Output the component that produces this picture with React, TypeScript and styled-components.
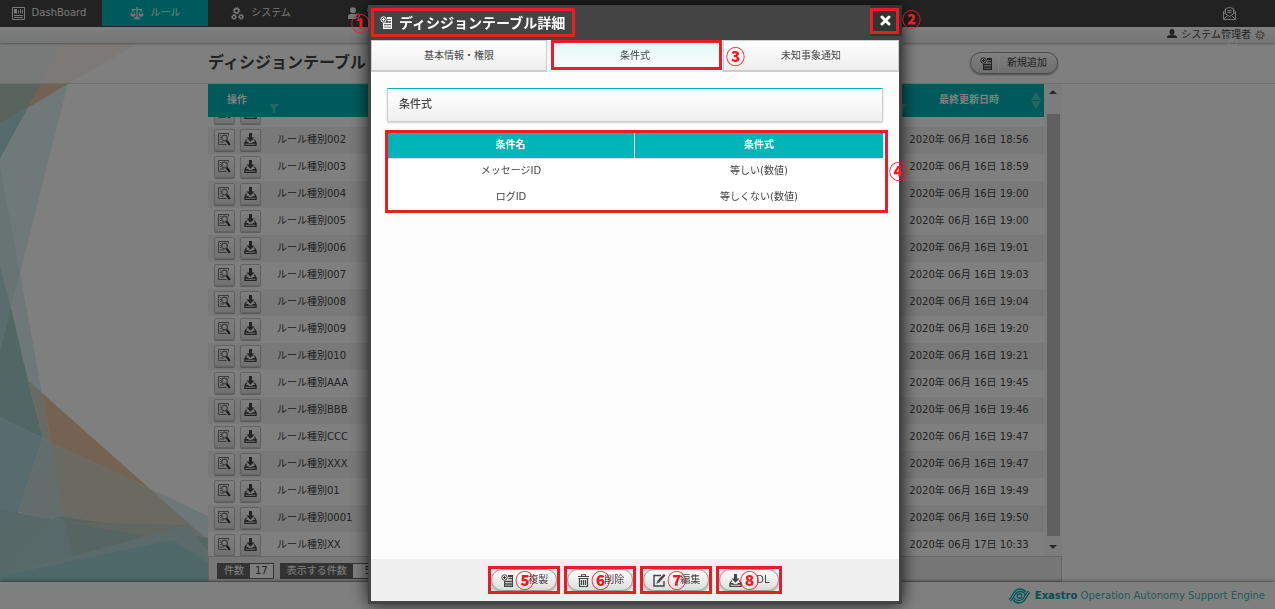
import React, { useLayoutEffect, useRef } from "react";
import styled, { createGlobalStyle, css } from "styled-components";

const TEAL = "#00b5b8";
const RED = "#ed1c24";
const DARK = "#444";

const GlobalStyle = createGlobalStyle`
  *, *::before, *::after { box-sizing: border-box; }
  body {
    margin: 0;
    background: #fff;
    color: #444;
    font: 10px/16px "DejaVu Sans", "Noto Sans CJK JP", sans-serif;
  }
  button, select { font: inherit; color: inherit; margin: 0; padding: 0; border: 0; background: none; }
  h1, h2, h3, ul { margin: 0; padding: 0; }
  ul { list-style: none; }
  a { color: inherit; text-decoration: none; }
  svg { display: block; flex: none; }
`;

/* ---------- icons ---------- */

const TableAddIcon = () => (
  <svg width="13" height="13" viewBox="0 0 13 13" fill="none" stroke="currentColor">
    <circle cx="3.5" cy="3.5" r="2.7" />
    <path d="M2 3.5h3M3.5 2v3" />
    <path d="M7 1h5v2H7z" fill="currentColor" stroke="none" />
    <path d="M7.500 4.500H12M4 7.500h8M4 10h8M3 12.300h9" strokeWidth="1.500" />
    <path d="M3.500 7v5.500M11.500 2v10.500" />
  </svg>
);

const DashIcon = () => (
  <svg width="13" height="13" viewBox="0 0 13 13" fill="none" stroke="currentColor">
    <path d="M.5.5h12v12H.5z" />
    <path d="M2 2h3v4.500H2zM6 3.500h1v3H6zM8 2h1v4.500H8zM10 3h1v3.500h-1z" fill="currentColor" stroke="none" />
    <path d="M2 8.500h9M2 10.500h9" />
  </svg>
);

const ScalesIcon = () => (
  <svg width="14" height="13" viewBox="0 0 14 13" fill="none" stroke="currentColor">
    <path d="M7 0v12M1.500 2.500h11M3.500 12h7M4.500 10.500h5" strokeWidth="1.200" />
    <path d="M3 3L.8 7.500h4.400zM11 3L8.800 7.500h4.400z" strokeWidth=".8" />
    <path d="M.3 7.500h5.400Q5 9.700 3 9.700T.3 7.500zM8.300 7.500h5.400Q13 9.700 11 9.700T8.300 7.500z" fill="currentColor" stroke="none" />
  </svg>
);

const GearsIcon = () => (
  <svg width="13" height="13" viewBox="0 0 13 13" fill="none" stroke="currentColor">
    <circle cx="5.500" cy="3.800" r="2.200" strokeWidth="1.600" />
    <circle cx="5.500" cy="3.800" r="3.300" strokeDasharray="1.300 1.300" />
    <circle cx="3" cy="10" r="1.600" strokeWidth="1.300" />
    <circle cx="3" cy="10" r="2.500" strokeDasharray="1 1" />
    <circle cx="10" cy="9.800" r="1.600" strokeWidth="1.300" />
    <circle cx="10" cy="9.800" r="2.500" strokeDasharray="1 1" />
  </svg>
);

const UserKeyIcon = () => (
  <svg width="12" height="13" viewBox="0 0 12 13" fill="currentColor">
    <circle cx="5" cy="3.200" r="3" />
    <path d="M0 12V9.500Q0 7 3 7h4q1 0 1 1v4z" />
    <circle cx="9.500" cy="9" r="2" fill="none" stroke="currentColor" />
  </svg>
);

const MailIcon = () => (
  <svg width="13" height="13" viewBox="0 0 13 13" fill="none" stroke="currentColor">
    <path d="M.5 4.500L3 3M12.500 4.500L10 3M.5 4.500v8h12v-8" />
    <path d="M2.500 6.500V1.500L6.500.5l4 1v5" />
    <path d="M.5 5.500l6 4 6-4M1 12l3.500-3.500M12 12L8.500 8.500M4.500 3.500h4M4.500 5.500h4" />
  </svg>
);

const LogoutIcon = () => (
  <svg width="12" height="13" viewBox="0 0 12 13" fill="none" stroke="#fff">
    <path d="M.5 1h3M6 1h3M.5 1v6M3.500 6.500h8v6h-8z" />
    <path d="M3.500 9h5" strokeWidth="2" />
  </svg>
);

const PersonIcon = () => (
  <svg width="10" height="12" viewBox="0 0 10 12" fill="currentColor">
    <ellipse cx="5" cy="3" rx="2.500" ry="3" />
    <path d="M0 9V8q0-1.500 3.500-2h3Q10 6.500 10 8v1z" />
  </svg>
);

const GearIcon = () => (
  <svg width="10" height="10" viewBox="0 0 10 10" fill="none" stroke="#777">
    <circle cx="5" cy="5" r="3.200" />
    <circle cx="5" cy="5" r="1" strokeWidth=".6" />
    <circle cx="5" cy="5" r="4.300" strokeDasharray="1.400 1.977" />
  </svg>
);

const DetailIcon = () => (
  <svg width="13" height="13" viewBox="0 0 13 13" fill="none" stroke="#777">
    <path d="M10.500 2.500V.5H.5v11h8" />
    <path d="M2 2.500h1M2 4.500h1M2 6.500h1M2 9h4" />
    <circle cx="6.500" cy="5" r="2.800" strokeWidth="1.200" />
    <path d="M8.700 7.600l3 4.400" stroke="#333" strokeWidth="2.200" />
  </svg>
);

const DownloadIcon = () => (
  <svg width="13" height="13" viewBox="0 0 13 13" fill="currentColor">
    <path d="M5 0h3v4.500h2.500L6.500 8.700l-4-4.200H5z" />
    <path d="M2 6.500h1.300L2 9h2l1 1h3l1-1h2L9.700 6.500H11l1.700 3V13H.3V9.500zM1.500 10.800v1h10v-1z" />
  </svg>
);

const TrashIcon = () => (
  <svg width="13" height="13" viewBox="0 0 13 13" fill="none" stroke="currentColor">
    <path d="M1 2.500h11M4.500 2V.7h4V2M1.500 4.500h10" />
    <path d="M2.500 4.500v8h8v-8M4.500 6v5M6.500 6v5M8.500 6v5" strokeWidth="1.200" />
  </svg>
);

const EditIcon = () => (
  <svg width="13" height="13" viewBox="0 0 13 13" fill="none" stroke="currentColor">
    <path d="M8 1.500H1v10.500h10V7" strokeWidth="1.400" />
    <path d="M11.700.8L5.500 7.400" strokeWidth="2.400" />
    <path d="M4.600 6.500L3.300 9.700l3.200-1.300z" fill="currentColor" stroke="none" />
  </svg>
);

const CloseIcon = () => (
  <svg width="11" height="11" viewBox="0 0 11 11" stroke="#fff" strokeWidth="3" strokeLinecap="round">
    <path d="M2 2l7 7M9 2L2 9" />
  </svg>
);

const FilterIcon = () => (
  <svg width="10" height="9" viewBox="0 0 10 9" fill="currentColor">
    <path d="M0 0h10L6.200 4.500V9H3.800V4.500z" />
  </svg>
);

const SortIcon = () => (
  <svg width="10" height="17" viewBox="0 0 10 17" fill="currentColor">
    <path d="M5 0l5 8H0zM0 9h10l-5 8z" />
  </svg>
);

const LogoIcon = () => (
  <svg width="23" height="16" viewBox="0 0 23 16" fill="none" stroke={TEAL} strokeWidth="1.400">
    <path d="M1 11.500Q3 10 5 6q2.500-5 7-5 3.500 0 6 3" />
    <path d="M2.500 13Q5 11 6.500 7.500q2-4 5.500-4 4 0 5.500 3.500" />
    <path d="M22 4.500Q20 6 18 10q-2.500 5-7 5-3.500 0-6-3" />
    <path d="M20.500 3Q18 5 16.500 8.500q-2 4-5.500 4Q7.500 12.500 6 10" />
    <circle cx="11.500" cy="8" r="2.300" />
  </svg>
);

const facets: [string, string][] = [
  ["0,43 62,43 42,83 28,108 0,124", "#b2c8be"],
  ["62,43 138,43 70,83 28,108", "#e4c4a2"],
  ["0,124 28,108 0,159", "#aad4da"],
  ["28,108 68,84 20,273 11,308 0,167 0,159", "#def2f5"],
  ["0,167 20,273 11,308 0,265", "#d0e8e6"],
  ["0,265 11,308 0,350", "#b2d8de"],
  ["20,273 42,393 28,380 11,308", "#dcf0f3"],
  ["11,308 28,380 43,438 0,418 0,350", "#a0cecc"],
  ["28,380 42,393 51,443 43,438", "#d2d4c6"],
  ["42,393 149,488 51,443", "#e8c6a6"],
  ["149,488 208,516 208,540", "#daeff4"],
  ["51,443 149,488 208,540 208,552 60,530", "#d4d4c6"],
  ["0,418 43,438 18,512 0,560", "#b0d6dc"],
  ["43,438 51,443 65,524 18,512", "#c6dcd8"],
  ["0,509 64,522 170,545 0,576", "#acd0d0"],
  ["57,516 208,538 208,550 66,556", "#a8cac4"],
  ["64,522 188,525 208,552 172,541", "#c4ccc0"],
  ["57,516 64,520 73,556 0,576", "#b0d2d2"],
  ["0,576 188,525 208,552 208,576", "#b6d6d6"],
  ["0,576 173,540 208,563 208,582 0,582", "#9ed0d4"],
];

const Backdrop = styled.svg`
  position: absolute;
  top: 0;
  left: 0;
`;

/* ---------- page shell ---------- */

const Page = styled.div`
  position: relative;
  display: flex;
  flex-direction: column;
  height: 100vh;
  overflow: hidden;
`;

const Nav = styled.nav`
  position: relative;
  display: flex;
  justify-content: space-between;
  flex: none;
  height: 27px;
  padding-right: 39px;
  background: ${DARK};
  color: #f0f0f0;
`;

const NavList = styled.ul`
  display: flex;
`;

const NavLink = styled.a<{ $home?: boolean; $active?: boolean }>`
  display: flex;
  align-items: center;
  justify-content: center;
  gap: 7px;
  min-width: ${(p) => (p.$home ? 102 : 106)}px;
  height: 26px;
  padding-right: ${(p) => (p.$home ? 4 : 0)}px;
  background: ${(p) => (p.$active ? TEAL : "transparent")};
`;

const IconLink = styled.button`
  display: flex;
  align-items: center;
`;

const LogoutButton = styled.button`
  position: absolute;
  top: 5px;
  right: 38px;
  opacity: 0.8;
`;

const UserBar = styled.div`
  position: relative;
  z-index: 1;
  display: flex;
  align-items: center;
  justify-content: flex-end;
  gap: 4px;
  flex: none;
  height: 16px;
  padding-right: 10px;
  background: linear-gradient(#fff, #eaeaea);
  box-shadow: 0 1px 2px rgba(0, 0, 0, 0.3);
`;

const TitleBar = styled.header`
  position: relative;
  display: flex;
  align-items: center;
  justify-content: space-between;
  flex: none;
  height: 41px;
  padding: 0 217px 0 208px;
  border-bottom: 1px solid #ddd;
  background: rgba(255, 255, 255, 0.8);
`;

const PageTitle = styled.h1`
  font-size: 16px;
  line-height: 24px;
`;

const PillButton = styled.button`
  position: relative;
  display: flex;
  align-items: center;
  height: 22px;
  border: 1px solid #999;
  border-radius: 11px;
  background: linear-gradient(#fff, #ddd);
  box-shadow: 0 1px 2px rgba(0, 0, 0, 0.4);
  color: #444;
`;

const PillIcon = styled.span`
  display: flex;
  align-items: center;
  height: 20px;
  padding: 0 5px 0 9px;
  border-right: 1px solid #fff;
`;

const PillLabel = styled.span<{ $wide?: boolean }>`
  padding: 0 ${(p) => (p.$wide ? 10 : 8)}px 0 8px;
`;

const ListArea = styled.main`
  position: relative;
  display: flex;
  flex-direction: column;
  flex: 1;
  min-height: 0;
  margin: 0 213px 0 208px;
  background: #fff;
`;

const ScrollRow = styled.div`
  display: flex;
  flex: 1;
  min-height: 0;
`;

const Scroller = styled.div`
  position: relative;
  z-index: 0;
  flex: 1;
  overflow: hidden;
`;

const RuleTable = styled.table`
  width: 100%;
  border-spacing: 0;
  table-layout: fixed;
`;

const RuleHead = styled.th<{ $width?: number }>`
  position: sticky;
  top: 0;
  z-index: 1;
  width: ${(p) => (p.$width ? `${p.$width}px` : "auto")};
  height: 33px;
  padding: 0 0 2px;
  background: ${TEAL};
  color: #fff;
  text-align: center;
`;

const HeadIcon = styled.span<{ $side: "left" | "right" }>`
  position: absolute;
  color: rgba(255, 255, 255, 0.3);
  ${(p) => (p.$side === "left" ? css`left: 3px; bottom: 4px;` : css`right: 3px; top: 8px;`)}
`;

const RuleRow = styled.tr`
  &:nth-child(even) { background: #f2f2f2; }
`;

const RuleCell = styled.td<{ $center?: boolean }>`
  height: 27px;
  padding: 0 0 2px ${(p) => (p.$center ? 0 : 11)}px;
  text-align: ${(p) => (p.$center ? "center" : "left")};
`;

const Actions = styled.div`
  display: flex;
  gap: 5px;
  padding: 0 0 0 6px;
`;

const ActionButton = styled.button`
  display: flex;
  align-items: center;
  justify-content: center;
  width: 21px;
  height: 22px;
  border: 1px solid #c4c4c4;
  border-radius: 2px;
  background: linear-gradient(#fff, #e2e2e2);
  box-shadow: 0 1px 1px rgba(0, 0, 0, 0.3);
`;

const Track = styled.div`
  display: flex;
  flex-direction: column;
  align-items: center;
  width: 18px;
  padding: 6px 0 7px;
  background: #f8f8f8;
`;

const Thumb = styled.div`
  flex: 1;
  width: 13px;
  margin: 20px 0 9px;
  background: #c1c1c1;
`;

const Arrow = styled.span<{ $down?: boolean }>`
  border: 4px solid transparent;
  ${(p) => (p.$down
    ? css`border-top-color: #505050; border-bottom: 0;`
    : css`border-bottom-color: #505050; border-top: 0;`)}
`;

const ListFooter = styled.div`
  display: flex;
  align-items: center;
  gap: 6px;
  flex: none;
  height: 26px;
  padding: 4px 8px 0;
  border: 1px solid #ccc;
  background: #eee;
`;

const Counter = styled.label`
  display: flex;
  align-items: center;
  height: 16px;
  padding-left: 6px;
  gap: 6px;
  border: 1px solid #666;
  background: #666;
  color: #fff;
`;

const CountValue = styled.output`
  height: 14px;
  padding: 0 5px;
  background: #fff;
  color: #444;
  line-height: 14px;
`;

const CountSelect = styled.select`
  appearance: none;
  width: 56px;
  height: 14px;
  padding-left: 12px;
  background: #fff;
  color: #444;
  line-height: 14px;
`;

const PageFooter = styled.footer`
  position: relative;
  display: flex;
  align-items: center;
  justify-content: flex-end;
  gap: 4px;
  flex: none;
  height: 27px;
  padding-right: 10px;
  background: #fff;
  box-shadow: 0 -1px 3px rgba(0, 0, 0, 0.4);
  color: #3fb5b5;
  b { color: #00a0a4; }
`;

/* ---------- dialog ---------- */

const Overlay = styled.div`
  position: fixed;
  inset: 0;
  z-index: 10;
  display: flex;
  justify-content: center;
  padding: 5px 5px 5px 0;
  background: rgba(0, 0, 0, 0.5);
`;

const Dialog = styled.section`
  display: flex;
  flex-direction: column;
  width: 534px;
  max-width: 100%;
  border: solid ${DARK};
  border-width: 0 3px 3px;
  background: #fdfdfd;
  box-shadow: 0 0 16px rgba(0, 0, 0, 0.8);
`;

const DialogHeader = styled.header`
  display: flex;
  justify-content: space-between;
  flex: none;
  height: 35px;
  background: ${DARK};
  color: #fff;
`;

const DialogTitle = styled.h2`
  position: relative;
  display: flex;
  align-items: center;
  gap: 6px;
  padding: 0 10px 0 9px;
  font-size: 14px;
  line-height: 20px;
`;

const CloseButton = styled.button`
  position: relative;
  display: flex;
  align-items: center;
  justify-content: center;
  width: 32px;
  height: 31px;
  margin-right: -3px;
  padding-right: 2px;
  background: #333;
`;

const Tabs = styled.div`
  display: grid;
  grid-template-columns: repeat(3, 1fr);
  flex: none;
`;

const Tab = styled.button<{ $active?: boolean }>`
  position: relative;
  height: 32px;
  border: 1px solid #ccc;
  border-width: 1px 1px 2px;
  background: linear-gradient(#fff, #eee);
  ${(p) => p.$active && css`
    border-color: transparent;
    background: linear-gradient(#e2f6f7, #fdfdfd);
  `}
`;

const DialogBody = styled.div`
  flex: 1;
  min-height: 0;
  padding: 16px;
`;

const SectionTitle = styled.h3`
  height: 34px;
  margin-bottom: 10px;
  padding-left: 11px;
  border: 1px solid #ccc;
  border-top-color: ${TEAL};
  border-radius: 0 0 2px 2px;
  background: linear-gradient(#fff, #f0f0f0);
  box-shadow: 0 1px 2px rgba(0, 0, 0, 0.2);
  font-size: 11px;
  font-weight: 500;
  line-height: 32px;
`;

const Marked = styled.div`
  position: relative;
`;

const ConditionTable = styled.table`
  width: 100%;
  border-spacing: 0;
  table-layout: fixed;
  text-align: center;
  th {
    height: 27px;
    padding: 0;
    border-bottom: 1px solid #ddd;
    background: ${TEAL};
    color: #fff;
  }
  th:first-child { border-right: 1px solid #ddd; }
  td { height: 26px; padding: 0 0 2px; background: #fff; }
`;

const DialogFooter = styled.footer`
  display: flex;
  align-items: center;
  justify-content: center;
  gap: 10px;
  flex: none;
  height: 42px;
  background: #f0f0f0;
`;

/* ---------- call-outs ---------- */

const Frame = styled.span<{ $inset: string }>`
  position: absolute;
  inset: ${(p) => p.$inset};
  z-index: 1;
  border: 3px solid ${RED};
  pointer-events: none;
`;

const Callout = styled.span<{ $left: string; $top: string }>`
  position: absolute;
  left: ${(p) => p.$left};
  top: ${(p) => p.$top};
  z-index: 2;
  width: 19px;
  color: ${RED};
  font: 900 19px/18px "Noto Sans CJK JP", sans-serif;
  text-align: center;
`;

/* ---------- data ---------- */

const rules: [string, string][] = [
  ["001", "16日 18:54"], ["002", "16日 18:56"], ["003", "16日 18:59"], ["004", "16日 19:00"],
  ["005", "16日 19:00"], ["006", "16日 19:01"], ["007", "16日 19:03"], ["008", "16日 19:04"],
  ["009", "16日 19:20"], ["010", "16日 19:21"], ["AAA", "16日 19:45"], ["BBB", "16日 19:46"],
  ["CCC", "16日 19:47"], ["XXX", "16日 19:47"], ["01", "16日 19:49"], ["0001", "16日 19:50"],
  ["XX", "17日 10:33"],
];

const conditions = [
  ["メッセージID", "等しい(数値)"],
  ["ログID", "等しくない(数値)"],
];

const commands = [
  { label: "複製", mark: "⑤", icon: <TableAddIcon /> },
  { label: "削除", mark: "⑥", icon: <TrashIcon /> },
  { label: "編集", mark: "⑦", icon: <EditIcon /> },
  { label: "DL", mark: "⑧", icon: <DownloadIcon /> },
];

function RuleList() {
  const scroller = useRef<HTMLDivElement>(null);
  useLayoutEffect(() => {
    if (scroller.current) scroller.current.scrollTop = 17;
  }, []);

  return (
    <ListArea>
      <ScrollRow>
        <Scroller ref={scroller}>
          <RuleTable>
            <thead>
              <tr>
                <RuleHead $width={58}>操作</RuleHead>
                <RuleHead><HeadIcon $side="left"><FilterIcon /></HeadIcon></RuleHead>
                <RuleHead $width={150}>
                  <HeadIcon $side="left"><FilterIcon /></HeadIcon>
                  最終更新日時
                  <HeadIcon $side="right"><SortIcon /></HeadIcon>
                </RuleHead>
              </tr>
            </thead>
            <tbody>
              {rules.map(([name, date]) => (
                <RuleRow key={name}>
                  <RuleCell $center>
                    <Actions>
                      <ActionButton aria-label="詳細"><DetailIcon /></ActionButton>
                      <ActionButton aria-label="ダウンロード"><DownloadIcon /></ActionButton>
                    </Actions>
                  </RuleCell>
                  <RuleCell>ルール種別{name}</RuleCell>
                  <RuleCell $center>2020年 06月 {date}</RuleCell>
                </RuleRow>
              ))}
            </tbody>
          </RuleTable>
        </Scroller>
        <Track>
          <Arrow />
          <Thumb />
          <Arrow $down />
        </Track>
      </ScrollRow>
      <ListFooter>
        <Counter>件数<CountValue>17</CountValue></Counter>
        <Counter>
          表示する件数
          <CountSelect defaultValue="50"><option>50</option><option>100</option></CountSelect>
        </Counter>
      </ListFooter>
    </ListArea>
  );
}

function DetailDialog() {
  return (
    <Overlay>
      <Dialog role="dialog" aria-label="ディシジョンテーブル詳細">
        <DialogHeader>
          <DialogTitle>
            <TableAddIcon />
            ディシジョンテーブル詳細
            <Frame $inset="3px 0" />
            <Callout $left="-20px" $top="9px">①</Callout>
          </DialogTitle>
          <CloseButton aria-label="閉じる">
            <CloseIcon />
            <Frame $inset="3px 3px 2px 0" />
            <Callout $left="32px" $top="5px">②</Callout>
          </CloseButton>
        </DialogHeader>
        <Tabs role="tablist">
          <Tab role="tab">基本情報・権限</Tab>
          <Tab role="tab" aria-selected $active>
            条件式
            <Frame $inset="-1px 0 0 3px" />
          </Tab>
          <Tab role="tab">
            未知事象通知
            <Callout $left="2px" $top="6px">③</Callout>
          </Tab>
        </Tabs>
        <DialogBody>
          <SectionTitle>条件式</SectionTitle>
          <Marked>
            <ConditionTable>
              <thead><tr><th>条件名</th><th>条件式</th></tr></thead>
              <tbody>
                {conditions.map(([name, expr]) => (
                  <tr key={name}><td>{name}</td><td>{expr}</td></tr>
                ))}
              </tbody>
            </ConditionTable>
            <Frame $inset="-2px -5px -2px -2px" />
            <Callout $left="502px" $top="30px">④</Callout>
          </Marked>
        </DialogBody>
        <DialogFooter>
          {commands.map((c) => (
            <PillButton key={c.label}>
              <PillIcon>{c.icon}</PillIcon>
              <PillLabel>{c.label}</PillLabel>
              <Frame $inset="-4px" />
              <Callout $left="calc(50% - 9px)" $top="1px">{c.mark}</Callout>
            </PillButton>
          ))}
        </DialogFooter>
      </Dialog>
    </Overlay>
  );
}

export default function App() {
  return (
    <>
      <GlobalStyle />
      <Page>
        <Backdrop width="208" height="582" viewBox="0 0 208 582" aria-hidden>
          {facets.map(([points, fill]) => <polygon key={points} points={points} fill={fill} />)}
        </Backdrop>
        <Nav>
          <NavList>
            <li><NavLink href="#dashboard" $home><DashIcon />DashBoard</NavLink></li>
            <li><NavLink href="#rule" $active><ScalesIcon />ルール</NavLink></li>
            <li><NavLink href="#system"><GearsIcon />システム</NavLink></li>
            <li><NavLink href="#admin"><UserKeyIcon />管理</NavLink></li>
          </NavList>
          <IconLink aria-label="メール"><MailIcon /></IconLink>
        </Nav>
        <UserBar>
          <PersonIcon />
          システム管理者
          <GearIcon />
          <LogoutButton aria-label="ログアウト"><LogoutIcon /></LogoutButton>
        </UserBar>
        <TitleBar>
          <PageTitle>ディシジョンテーブル</PageTitle>
          <PillButton>
            <PillIcon><TableAddIcon /></PillIcon>
            <PillLabel $wide>新規追加</PillLabel>
          </PillButton>
        </TitleBar>
        <RuleList />
        <PageFooter>
          <LogoIcon />
          <span><b>Exastro</b> Operation Autonomy Support Engine</span>
        </PageFooter>
      </Page>
      <DetailDialog />
    </>
  );
}
